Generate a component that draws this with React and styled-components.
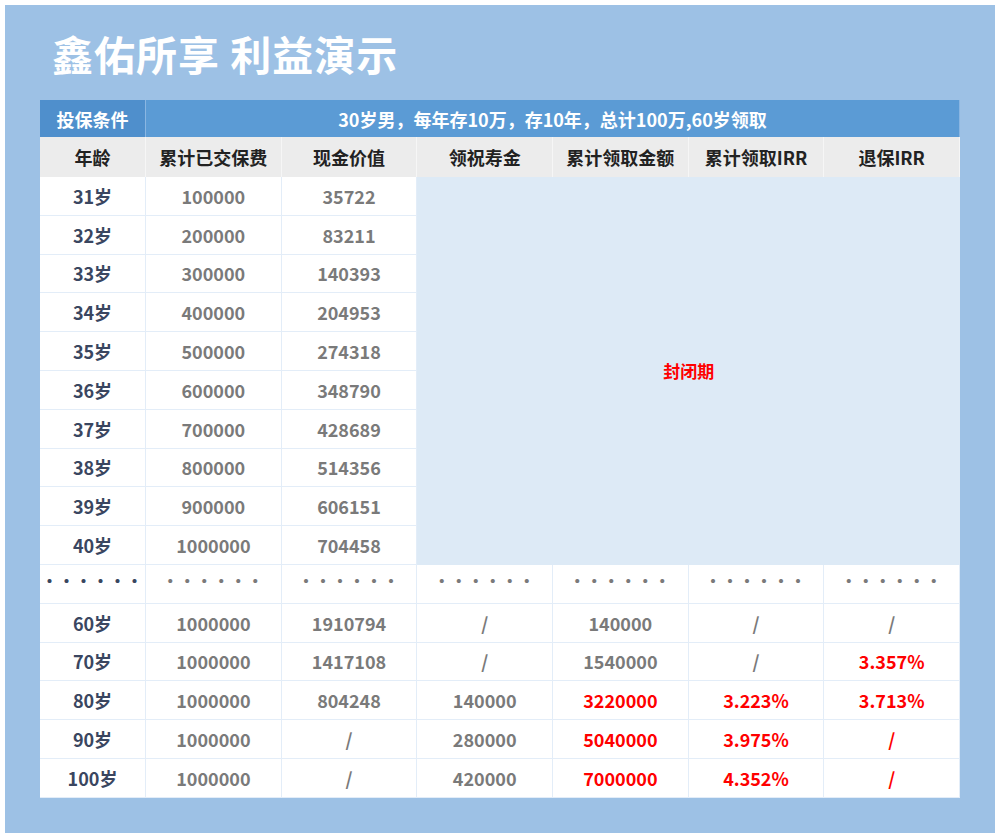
import React from "react";
import styled, { createGlobalStyle } from "styled-components";

const Global = createGlobalStyle`
  body { margin: 0; background: #fff; font-family: "Noto Sans CJK SC", "Noto Sans", sans-serif; }
`;

const Panel = styled.div`
  margin: 5px;
  width: 990px;
  height: 828px;
  background: #9dc1e5;
  box-sizing: border-box;
  padding: 18px 35px 0 35px;
`;

const Title = styled.h1`
  margin: 0 0 0 12px;
  height: 77px;
  color: #fff;
  font-size: 41px;
  font-weight: 700;
  line-height: 60px;
  letter-spacing: 1px;
`;

const Grid = styled.div`
  display: grid;
  grid-template-columns: 106px repeat(6, 1fr);
  grid-template-rows: 37px 40px repeat(16, 38.8px);
  width: 920px;
  background: #fff;
`;

const Cell = styled.div`
  display: flex;
  align-items: center;
  justify-content: center;
  box-sizing: border-box;
  border-right: 1px solid #e3edf8;
  border-bottom: 1px solid #e3edf8;
  font-size: 18px;
  font-weight: ${(p) => (p.$age ? 700 : 600)};
  color: ${(p) => (p.$red ? "#ff0000" : p.$age ? "#3a4660" : "#7a7a7a")};
`;

const HeadCell = styled(Cell)`
  background: ${(p) => (p.$dark ? "#4f8fcc" : "#5b9bd5")};
  color: #fff;
  font-weight: 700;
  border-right: 1px solid #8ab6e2;
  border-bottom: none;
  grid-column: ${(p) => p.$span || "auto"};
`;

const ColHead = styled(Cell)`
  background: #ececec;
  color: #222;
  font-weight: 700;
  border-right: 1px solid #f6f6f6;
  border-bottom: none;
`;

const Closed = styled.div`
  grid-column: 4 / 8;
  grid-row: 3 / 13;
  background: #ddeaf6;
  display: flex;
  align-items: center;
  justify-content: center;
  color: #ff0000;
  font-weight: 700;
  font-size: 17px;
`;

const Dots = styled.span`
  letter-spacing: 1px;
  font-size: 16px;
  transform: translateY(-4px);
`;

const early = [
  ["31岁", "100000", "35722"],
  ["32岁", "200000", "83211"],
  ["33岁", "300000", "140393"],
  ["34岁", "400000", "204953"],
  ["35岁", "500000", "274318"],
  ["36岁", "600000", "348790"],
  ["37岁", "700000", "428689"],
  ["38岁", "800000", "514356"],
  ["39岁", "900000", "606151"],
  ["40岁", "1000000", "704458"],
];

const late = [
  ["60岁", "1000000", "1910794", "/", "140000", "/", "/"],
  ["70岁", "1000000", "1417108", "/", "1540000", "/", "3.357%"],
  ["80岁", "1000000", "804248", "140000", "3220000", "3.223%", "3.713%"],
  ["90岁", "1000000", "/", "280000", "5040000", "3.975%", "/"],
  ["100岁", "1000000", "/", "420000", "7000000", "4.352%", "/"],
];

const heads = ["年龄", "累计已交保费", "现金价值", "领祝寿金", "累计领取金额", "累计领取IRR", "退保IRR"];

export default function App() {
  return (
    <>
      <Global />
      <Panel>
        <Title>鑫佑所享 利益演示</Title>
        <Grid>
          <HeadCell $dark>投保条件</HeadCell>
          <HeadCell $span="2 / 8">30岁男，每年存10万，存10年，总计100万,60岁领取</HeadCell>
          {heads.map((h) => (
            <ColHead key={h}>{h}</ColHead>
          ))}
          <Closed>封闭期</Closed>
          {early.map((r, i) => (
            <React.Fragment key={r[0]}>
              <Cell $age style={{ gridRow: i + 3, gridColumn: 1 }}>{r[0]}</Cell>
              <Cell style={{ gridRow: i + 3, gridColumn: 2 }}>{r[1]}</Cell>
              <Cell style={{ gridRow: i + 3, gridColumn: 3 }}>{r[2]}</Cell>
            </React.Fragment>
          ))}
          {Array.from({ length: 7 }).map((_, i) => (
            <Cell key={"d" + i} $age={i === 0} style={{ gridRow: 13 }}>
              <Dots>••••••</Dots>
            </Cell>
          ))}
          {late.map((r, ri) =>
            r.map((v, ci) => (
              <Cell
                key={ri + "-" + ci}
                $age={ci === 0}
                $red={(ci >= 4 && ri >= 2) || (ci === 6 && ri === 1) || (ci === 5 && ri >= 2)}
              >
                {v}
              </Cell>
            ))
          )}
        </Grid>
      </Panel>
    </>
  );
}
